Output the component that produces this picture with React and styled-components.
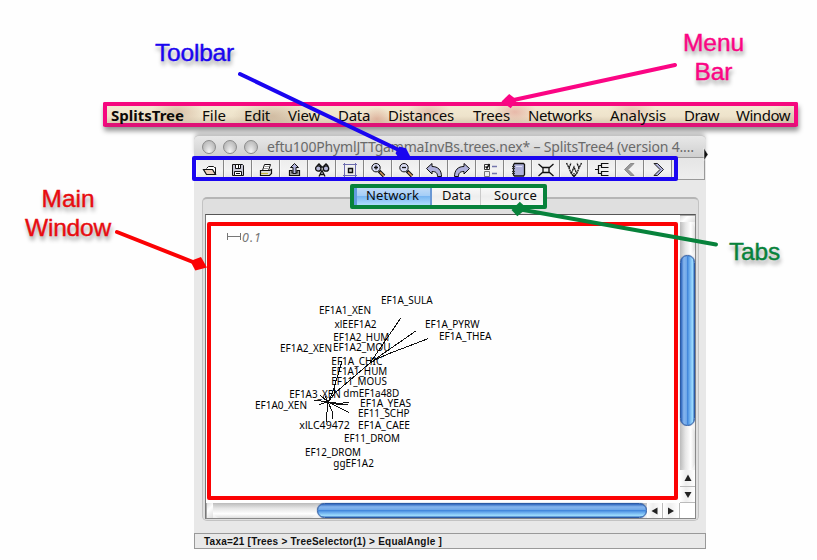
import React, { useLayoutEffect, useRef } from "react";
import styled, { createGlobalStyle, css } from "styled-components";

const Global = createGlobalStyle`
  * { box-sizing: border-box; }
  body { margin: 0; background: #fefefe; overflow: hidden; }
`;

const ui = `"Noto Sans", "Open Sans", sans-serif`;

/* Single-line text whose tracking is adjusted so that it spans a given width. */
const FitBox = styled.span`
  display: block;
  width: ${(p) => p.$width}px;
  white-space: pre;
  flex: none;
`;
function Fit({ width, children }) {
  const ref = useRef(null);
  useLayoutEffect(() => {
    const el = ref.current;
    el.style.letterSpacing = "0px";
    const natural = el.getBoundingClientRect().width;
    el.style.letterSpacing = `${(width - natural) / children.length}px`;
  }, [width, children]);
  return (
    <FitBox $width={width}>
      <span ref={ref}>{children}</span>
    </FitBox>
  );
}

const Page = styled.div`
  position: relative;
  width: 817px;
  height: 560px;
  padding-top: 102px;
  overflow: hidden;
  background: #fefefe;
`;

const MenuBar = styled.nav`
  display: flex;
  align-items: flex-start;
  width: 695px;
  height: 25px;
  margin-left: 103px;
  padding: 1px 0 0 4px;
  border: 4px solid #f5087f;
  border-bottom-color: #df1177;
  border-radius: 2px;
  box-shadow: 1px 4px 5px rgba(0, 0, 0, 0.42);
  background:
    radial-gradient(ellipse 26px 14px at 70px 6px, #c9a58c99, transparent),
    radial-gradient(ellipse 40px 16px at 165px 10px, #b79a7f88, transparent),
    radial-gradient(ellipse 16px 12px at 270px 13px, #d79a8599, transparent),
    radial-gradient(ellipse 22px 12px at 322px 6px, #dca69a99, transparent),
    radial-gradient(ellipse 22px 12px at 408px 6px, #e29b9199, transparent),
    radial-gradient(ellipse 24px 12px at 525px 4px, #dfa89c88, transparent),
    radial-gradient(ellipse 20px 14px at 682px 12px, #c9b09a88, transparent),
    linear-gradient(180deg, #f3ead2, #eee3cb 60%, #d9cbb2);
`;
const MenuItem = styled.div`
  margin-right: ${(p) => p.$gap}px;
  color: #0c0a08;
  font: ${(p) => (p.$bold ? 700 : 400)} 15px/17px ${ui};
`;

const Window = styled.main`
  display: flex;
  flex-direction: column;
  width: 512px;
  height: 414px;
  margin: 8px 0 0 194px;
  background: #e8e8e8;
  border-radius: 5px 5px 0 0;
`;
const TitleBar = styled.header`
  display: flex;
  align-items: center;
  height: 23px;
  padding-left: 8px;
  border-radius: 5px 5px 0 0;
  border-top: 1px solid #c4c4c4;
  border-bottom: 1px solid #999;
  background: linear-gradient(#e8e8e8, #dcdcdc 50%, #cfcfcf);
  box-shadow: 0 -3px 4px -1px rgba(0, 0, 0, 0.25);
`;
const Light = styled.i`
  width: 14px;
  height: 14px;
  margin-right: 7px;
  border: 1px solid #8c8c8c;
  border-radius: 50%;
  background: radial-gradient(ellipse at 50% 90%, #f5f5f5, #c9c9c9 55%, #aaa);
`;
const Title = styled.h1`
  margin: 0 0 0 2px;
  color: #6a6a6a;
  font: 400 14px/20px ${ui};
`;

const Toolbar = styled.div`
  display: flex;
  height: 22px;
  margin-right: 1px;
  padding-left: 2px;
  border-right: 1px solid #999;
  border-bottom: 1px solid #999;
  background: linear-gradient(#e5e5e5, #eee);
`;
const Tool = styled.button`
  display: flex;
  align-items: center;
  justify-content: center;
  width: 28px;
  height: 21px;
  padding: 2px 0 0;
  border: 0;
  border-right: 1px solid #858585;
  box-shadow: inset 1px 0 #f7f7f7;
  background: linear-gradient(#ececec, #f3f3f3 60%, #e4e4e4);
`;

const Content = styled.section`
  display: flex;
  flex-direction: column;
  flex: 1;
  padding: 17px 7px 12px 8px;
`;
const Group = styled.div`
  display: flex;
  flex-direction: column;
  height: 324px;
  padding: 0 3px 2px 2px;
  border: 1px solid #c3c3c3;
  border-top: 2px solid #b5b5b5;
  border-radius: 5px;
  background: #dfdfdf;
`;
const Tabs = styled.div`
  display: flex;
  width: 193px;
  height: 20px;
  margin: -12px 0 8px 149px;
  background: #efefef;
`;
const Tab = styled.div`
  width: ${(p) => p.$width}px;
  height: 19px;
  padding-left: ${(p) => p.$inset}px;
  border-right: 1px solid #c9c9c9;
  color: #0b0b0b;
  font: 400 13px/17px ${ui};
  background: linear-gradient(#fafafa, #eeeeee 50%, #f8f8f8);
  ${(p) =>
    p.$active &&
    css`
      border-right: 2px solid #6a98d4;
      border-left: 3px solid #619be0;
      background: linear-gradient(#c5ddf7, #a5cef7 45%, #79b6f2 50%, #b5e2ff);
    `}
`;

const Pane = styled.div`
  display: grid;
  grid-template-columns: 474px 15px;
  grid-template-rows: 288px 15px;
  width: 491px;
  height: 305px;
  border: 1px solid #777;
  border-color: #555 #888 #888 #777;
  background: #fff;
`;
const Canvas = styled.div`
  overflow: hidden;
  background: #fefefe;
`;
const Track = styled.div`
  display: flex;
  flex-direction: ${(p) => (p.$vertical ? "column" : "row")};
  background: ${(p) =>
    p.$vertical
      ? "linear-gradient(90deg, #bdbdbd, #e9e9e9 35%, #fff 70%, #ededed)"
      : "linear-gradient(#bdbdbd, #e9e9e9 35%, #fff 70%, #ededed)"};
  ${(p) => (p.$vertical ? "border-top: 1px solid #aaa;" : "border-left: 1px solid #aaa;")}
`;
const Cap = styled.div`
  flex: 0 0 ${(p) => p.$size}px;
  background: linear-gradient(135deg, #ddd, #fff 40%, #ddd);
`;
const Spacer = styled.div`
  flex: 0 0 ${(p) => p.$size}px;
  border-radius: 8px;
  background: ${(p) =>
    p.$vertical
      ? "linear-gradient(90deg, #bababa, #e5e5e5 35%, #fff 72%, #dedede)"
      : "linear-gradient(#bababa, #e5e5e5 35%, #fff 72%, #dedede)"};
`;
const Thumb = styled.div`
  flex: 0 0 ${(p) => p.$size}px;
  border-radius: 8px;
  border: 1px solid #2c5ba5;
  background: ${(p) =>
    `linear-gradient(${p.$vertical ? "90deg" : "180deg"}, #2e65bd 0%, #85b5ee 22%, #72a9e9 42%, #4388dc 50%, #69abed 65%, #9ddcfe 88%, #4d83c8 100%)`};
  box-shadow: 0 0 1px #143b80;
`;
const ArrowKey = styled.div`
  display: flex;
  align-items: center;
  justify-content: center;
  flex: 0 0 ${(p) => p.$size}px;
  background: linear-gradient(90deg, #fff, #eee 40%, #fff);
  ${(p) => (p.$vertical ? "border-bottom" : "border-right")}: 1px solid #bbb;
`;

const Status = styled.footer`
  height: 16px;
  padding-left: 9px;
  border: 1px solid #999;
  color: #111;
  background: #e9e9e9;
  font: 700 10px/15px "Liberation Sans", Arial, sans-serif;
`;

const Frame = styled.div`
  position: absolute;
  left: ${(p) => p.$x}px;
  top: ${(p) => p.$y}px;
  width: ${(p) => p.$w}px;
  height: ${(p) => p.$h}px;
  border: 4px solid ${(p) => p.$color};
  border-radius: 2px;
`;
const Overlay = styled.svg`
  position: absolute;
  inset: 0;
  pointer-events: none;
`;
const Callout = styled.div`
  position: absolute;
  left: ${(p) => p.$x}px;
  top: ${(p) => p.$y}px;
  display: flex;
  flex-direction: column;
  align-items: center;
  color: ${(p) => p.$color};
  font: 400 24.5px/29px "Liberation Sans", Arial, sans-serif;
  -webkit-text-stroke: 0.4px ${(p) => p.$color};
  text-shadow: 1px 4px 4px rgba(0, 0, 0, 0.42);
`;

const menus = [
  ["SplitsTree", 73, 18],
  ["File", 24, 18],
  ["Edit", 26, 18],
  ["View", 32, 18],
  ["Data", 32, 18],
  ["Distances", 66, 19],
  ["Trees", 37, 18],
  ["Networks", 64, 18],
  ["Analysis", 56, 18],
  ["Draw", 35, 17],
  ["Window", 54, 0],
];

const ink = { fill: "none", stroke: "#111", strokeWidth: 1 };
const lens = (minus) => (
  <>
    <path d="M9 9l5 5" stroke="#111" strokeWidth="3.6" />
    <path d="M10 10l4 4" stroke="#d59a5e" strokeWidth="1.6" />
    <circle cx="6" cy="5.7" r="4.2" fill="#d9dcf5" stroke="#111" />
    <path d={minus ? "M4 5.5h4" : "M4 5.5h4M6 3.5v4"} stroke="#111" strokeWidth="1.3" />
  </>
);
const icons = {
  open: (
    <>
      <path d="M4.500 6.500l2-2h5l1 1h1v7" fill="#fff" stroke="#111" />
      <path d="M1.500 7.500h9l3 5h-9z" fill="#ead0bb" stroke="#111" strokeWidth="1.200" />
    </>
  ),
  save: (
    <>
      <path d="M2.500 2.500h10l1 1v10h-11z" fill="#c9c9d6" stroke="#111" />
      <path d="M5.500 2.500h5v4h-5zM4.500 9.500h7v4h-7z" fill="#fff" stroke="#111" />
      <path d="M8.500 3v3M6 11.500h4" {...ink} />
    </>
  ),
  print: (
    <>
      <path d="M4.500 8.500l2-6h6l-2 6z" fill="#fff" stroke="#111" />
      <path d="M2.500 8.500h9l2-1v4l-2 2h-9z" fill="#ddd" stroke="#111" strokeWidth="1.200" />
      <path d="M7 4.500h4M6 6.500h4" stroke="#999" />
      <path d="M3 11.500h7" stroke="#c4b53c" strokeWidth="1.2" />
    </>
  ),
  export: (
    <>
      <path d="M3.500 8.500v5h10v-5h-2.500v2.500h-5v-2.500z" fill="#aaa" stroke="#111" strokeWidth="1.200" />
      <path d="M8.500 1.500l4 4h-2.500v6h-3v-6h-2.500z" fill="#b3b5df" stroke="#111" />
    </>
  ),
  find: (
    <>
      <path d="M3 4l2-2 2 2v1h3V4l2-2 2 2" {...ink} strokeWidth="1.5" />
      <circle cx="4.300" cy="6.500" r="2.700" fill="#b6b8d8" stroke="#111" strokeWidth="1.300" />
      <circle cx="12" cy="6.500" r="2.700" fill="#b6b8d8" stroke="#111" strokeWidth="1.300" />
      <path d="M5 14.500l3-6 3 6M6 12.500h4" {...ink} strokeWidth="1.300" />
    </>
  ),
  fit: (
    <>
      <path d="M2.500 1v14M13.500 1v14M1 2.500h14M1 13.500h14" stroke="#6c6cae" />
      <path d="M6.500 6.500h4v4h-4z" fill="#ccc" stroke="#111" strokeWidth="1.400" />
    </>
  ),
  zoomIn: lens(false),
  zoomOut: lens(true),
  undo: <path d="M0.500 6.500l5.500-5v3c6 0 9.500 3.500 9.500 10h-4c0-4-2-5-5.500-5v2.500z" fill="#aeb0dc" stroke="#111" />,
  redo: <path d="M15.500 6.500l-5.500-5v3c-6 0-9.500 3.500-9.500 10h4c0-4 2-5 5.500-5v2.500z" fill="#aeb0dc" stroke="#111" />,
  checks: (
    <>
      <path d="M2.500 2.500h5v5h-5z" fill="#fff" stroke="#333" />
      <path d="M3.500 4.500l1.500 1.500L7.500 2" {...ink} strokeWidth="1.500" />
      <path d="M2.500 9.500h5v5h-5z" fill="#eee" stroke="#777" />
      <path d="M10 4.500h5M10 11.500h5" stroke="#7476ac" strokeWidth="1.500" />
    </>
  ),
  book: (
    <>
      <path d="M4.500 1.500h9l1 1v10l-1 1.500h-9l-1-1v-10z" fill="#aeb0da" stroke="#111" strokeWidth="1.300" />
      <path d="M2 4.500h3M2 6.500h3M2 9.500h3M2 11.500h3" stroke="#333" />
      <path d="M6 4.500h6" stroke="#ddddf5" />
    </>
  ),
  network: <path d="M0.500 2l4 3.500h7l4-3.500M0.500 14l4-3.500h7l4 3.500M5 5.500v5M11 5.500v5" {...ink} strokeWidth="1.300" />,
  tree: <path d="M0.500 1l2.500 5 2 5 3 4 3-4 2-5 2.500-5M3 6l2-5M5.500 11l2.500-6 2.500 6M13 6l-2-5M8 15v-4" {...ink} strokeWidth="1.300" strokeDasharray="2 .5" />,
  dendro: <path d="M1 7.500h3M4.500 3v9M4.500 3.500h3M7.500 1.500h7M7.500 1v5M7.500 5.500h7M4.500 11.500h3M7.500 9v5M7.500 9.500h7M7.500 13.500h7" {...ink} strokeWidth="1.200" />,
  back: <path d="M8.500 1.500L2.500 7.500l6 6h3.500l-6-6 6-6z" fill="#999" stroke="#8c8c8c" />,
  next: <path d="M4 1.500l6 6-6 6h3.500l6-6-6-6z" fill="#aeb0dc" stroke="#222" strokeWidth="1" />,
};

const taxa = [
  ["EF1A_SULA", 381, 304, 51.6],
  ["EF1A1_XEN", 319, 314, 52],
  ["xlEEF1A2", 334.5, 328, 42],
  ["EF1A2_HUM", 333.3, 341, 56],
  ["EF1A_PYRW", 425, 328, 54.5],
  ["EF1A_THEA", 439, 340, 52.5],
  ["EF1A2_XEN", 280, 352, 52],
  ["EF1A2_MOU", 333, 351, 57.5],
  ["EF1A_CHIC", 331.3, 365, 51],
  ["EF1A1_HUM", 331.3, 375, 56],
  ["EF11_MOUS", 331.3, 385, 55.5],
  ["EF1A3_XEN", 289.3, 398, 51.5],
  ["dmEF1a48D", 343.3, 397, 56],
  ["EF1A0_XEN", 255, 409, 52],
  ["EF1A_YEAS", 360, 407, 51],
  ["EF11_SCHP", 358, 417, 51.5],
  ["EF1A_CAEE", 358, 429, 52],
  ["xlLC49472", 299.3, 429, 50.5],
  ["EF11_DROM", 344, 442, 56],
  ["EF12_DROM", 305, 456, 56],
  ["ggEF1A2", 333.3, 467, 40.5],
];

const Taxon = styled.text`
  fill: #000;
  font: 10.3px ${ui};
`;
const ScaleLabel = styled.text`
  fill: #777;
  font: italic 12.5px "Noto Sans", sans-serif;
`;

function SplitsGraph() {
  return (
    <svg width="474" height="288" viewBox="206 215 474 288">
      <path d="M227.500 233v7M240.500 233v7M227.500 236.500h13" stroke="#777" fill="none" />
      <ScaleLabel x="242" y="242" textLength="19">0.1</ScaleLabel>
      <g stroke="#111" fill="none" strokeWidth="1" shapeRendering="crispEdges">
        <path d="M328 402L335 393L370 363L377 359L388 354L428.500 338.500" />
        <path d="M370 363L400.500 318.500M374 360L416.500 330.500" />
        <path d="M328 402L332 394L338 375L342 361" />
        <path d="M328 402L314 400M328 402L319 404.500M328 402L320 395M328 402L325 396M334 393V386" />
        <path d="M328 402L340 403.500L349 402M328 402L340 405L348 404M328 402L349 412.500" />
        <path d="M328 402L326 422M328 402L332 411L333 419" />
      </g>
      {taxa.map(([name, x, y, w]) => (
        <Taxon key={name} x={x} y={y} textLength={w} lengthAdjust="spacingAndGlyphs">
          {name}
        </Taxon>
      ))}
    </svg>
  );
}

const Key = ({ size, vertical, d }) => (
  <ArrowKey $size={size} $vertical={vertical}>
    <svg width="8" height="8" viewBox="0 0 8 8">
      <path d={d} fill="#222" />
    </svg>
  </ArrowKey>
);

const blue = "#1a05f0";
const green = "#07823b";
const red = "#fb0204";
const pink = "#fb0584";

const arrows = [
  { c: blue, line: "M240 74L403 152", tip: "395.500,153.300 399.300,146.500 406,148.300 410.500,157 398,157" },
  { c: pink, line: "M675 65L509 101", tip: "501.500,101.500 509.200,94 517,100 510.700,108.300" },
  { c: green, line: "M716 244.500L518 209", tip: "511.500,210 519.800,201.700 526.800,208.300 517.300,216.200" },
  { c: red, line: "M117 232L198 264", tip: "190.300,261 201,257 207,267.500 195.300,270.500" },
];

export default function App() {
  return (
    <Page>
      <Global />
      <MenuBar>
        {menus.map(([label, w, gap], i) => (
          <MenuItem key={label} $gap={gap} $bold={i === 0}>
            <Fit width={w}>{label}</Fit>
          </MenuItem>
        ))}
      </MenuBar>

      <Window>
        <TitleBar>
          <Light />
          <Light />
          <Light />
          <Title>
            <Fit width={427}>eftu100PhymlJTTgammaInvBs.trees.nex* – SplitsTree4 (version 4.…</Fit>
          </Title>
        </TitleBar>
        <Toolbar>
          {Object.entries(icons).map(([name, art]) => (
            <Tool key={name} aria-label={name}>
              <svg width="16" height="16" viewBox="0 0 16 16">
                {art}
              </svg>
            </Tool>
          ))}
        </Toolbar>
        <Content>
          <Group>
            <Tabs>
              <Tab $width={78} $inset={9} $active>
                <Fit width={53}>Network</Fit>
              </Tab>
              <Tab $width={49} $inset={10}>
                <Fit width={29}>Data</Fit>
              </Tab>
              <Tab $width={66} $inset={13}>
                <Fit width={43}>Source</Fit>
              </Tab>
            </Tabs>
            <Pane>
              <Canvas>
                <SplitsGraph />
              </Canvas>
              <Track $vertical>
                <Cap $size={6} />
                <Spacer $size={33} $vertical />
                <Thumb $size={171} $vertical />
                <Spacer $size={44} $vertical />
                <Key size={17} vertical d="M4 0.500L7.500 7h-7z" />
                <Key size={16} vertical d="M4 7L7.500 1h-7z" />
              </Track>
              <Track>
                <Cap $size={6} />
                <Spacer $size={104} />
                <Thumb $size={330} />
                <Key size={16} d="M0.500 4L6.500 0.500v7z" />
                <Key size={17} d="M7 4L1 0.500v7z" />
              </Track>
            </Pane>
          </Group>
        </Content>
        <Status>
          <Fit width={238}>{"Taxa=21 [Trees > TreeSelector(1) > EqualAngle ]"}</Fit>
        </Status>
      </Window>

      <Frame $x={192} $y={156} $w={486} $h={25} $color={blue} />
      <Frame $x={350} $y={184} $w={197} $h={25} $color={green} />
      <Frame $x={207} $y={222} $w={471} $h={278} $color={red} />
      <Overlay width="817" height="560" viewBox="0 0 817 560">
        {arrows.map(({ c, line, tip }) => (
          <g key={c}>
            <path d={line} stroke={c} strokeWidth="4" strokeLinecap="round" />
            <polygon points={tip} fill={c} />
          </g>
        ))}
        <path d="M704 148l4 6.500-4 6z" fill="#111" stroke="#fff" strokeWidth=".5" />
      </Overlay>
      <Callout $x={155} $y={38} $color={blue}>
        <Fit width={79}>Toolbar</Fit>
      </Callout>
      <Callout $x={683} $y={28} $color={pink}>
        <Fit width={61}>Menu</Fit>
        <Fit width={38}>Bar</Fit>
      </Callout>
      <Callout $x={25} $y={184} $color="#e80c10">
        <Fit width={53}>Main</Fit>
        <Fit width={86}>Window</Fit>
      </Callout>
      <Callout $x={729} $y={237} $color={green}>
        <Fit width={51}>Tabs</Fit>
      </Callout>
    </Page>
  );
}
